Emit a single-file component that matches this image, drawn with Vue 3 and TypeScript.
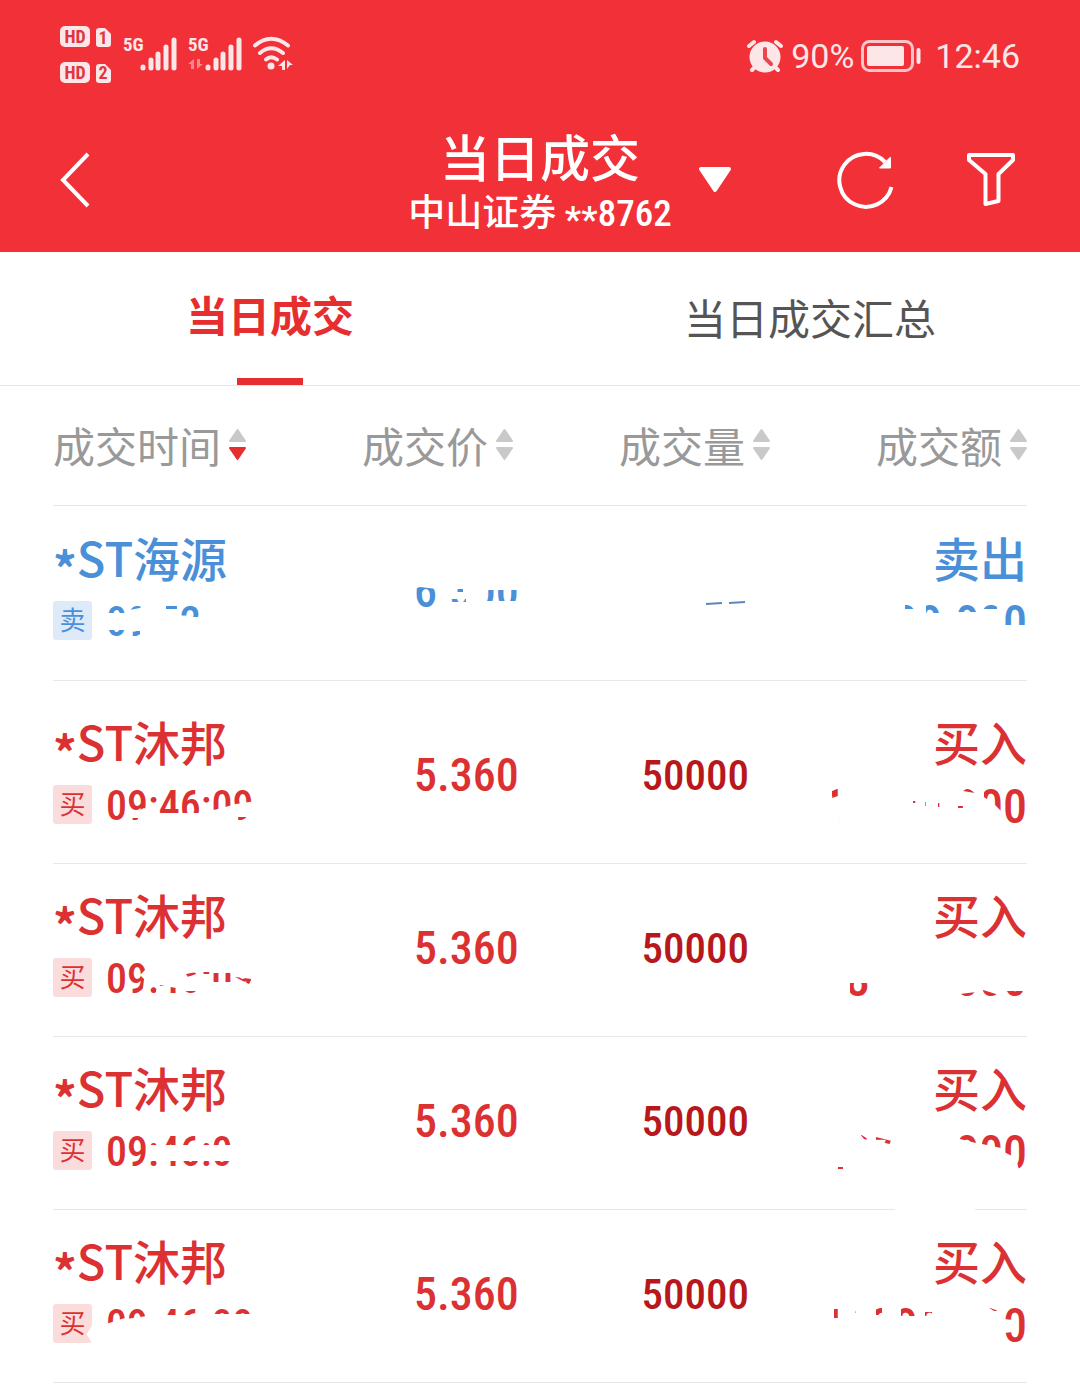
<script setup lang="ts">
type Side = 'sell' | 'buy'
type Point = [number, number]

interface Trade {
  id: number
  side: Side
  name: string
  time: string
  price: string
  volume: string
  amount: string
  timeParts: Point[][]
  priceParts?: Point[][]
  amountParts: Point[][]
}

interface Column {
  key: string
  label: string
  order: 'none' | 'desc'
}

const box = (x1: number, y1: number, x2: number, y2: number): Point[] => [
  [x1, y1],
  [x2, y1],
  [x2, y2],
  [x1, y2],
]

// Private values are only shown through a few small windows.
const reveal = (parts?: Point[][]) =>
  parts
    ? {
        clipPath: `path('${parts
          .map((part) => 'M' + part.map((p) => p.join(' ')).join('L') + 'Z')
          .join('')}')`,
      }
    : {}

const columns: Column[] = [
  { key: 'time', label: '成交时间', order: 'desc' },
  { key: 'price', label: '成交价', order: 'none' },
  { key: 'volume', label: '成交量', order: 'none' },
  { key: 'amount', label: '成交额', order: 'none' },
]

const trades: Trade[] = [
  {
    id: 1,
    side: 'sell',
    name: 'ST海源',
    time: '09:52:',
    price: '6.300',
    volume: '',
    amount: '68800.000',
    timeParts: [
      box(0, 4, 19, 13),
      box(0, 30, 19, 40),
      [[23, 10], [26, 4], [38, 4], [34, 8]],
      box(26, 31, 34, 40),
      box(60, 4, 71, 9),
      box(75, 4, 94, 17),
    ],
    priceParts: [
      [[0, 22], [6, 20], [23, 22], [23, 46], [0, 46]],
      box(36, 22, 49, 25),
      box(36, 32, 52, 35),
      box(72, 23, 106, 34),
    ],
    amountParts: [
      box(85, 4, 97, 9),
      box(106, 4, 124, 13),
      box(138, 4, 156, 12),
      box(162, 4, 177, 9),
      box(184, 4, 207, 25),
    ],
  },
  {
    id: 2,
    side: 'buy',
    name: 'ST沐邦',
    time: '09:46:09',
    price: '5.360',
    volume: '50000',
    amount: '18700.000',
    timeParts: [
      box(0, 0, 20, 40),
      [[20, 0], [150, 0], [150, 17], [130, 20], [112, 25], [92, 29], [50, 29], [38, 24], [30, 28], [20, 22]],
      box(26, 34, 32, 40),
      box(132, 33, 140, 40),
    ],
    amountParts: [
      [[12, 4], [24, 4], [24, 10], [12, 14]],
      box(18, 32, 24, 40),
      box(93, 17, 99, 19),
      box(105, 18, 110, 22),
      box(118, 19, 123, 23),
      box(138, 22, 143, 24),
      [[143, 7], [148, 4], [155, 9]],
      [[164, 4], [182, 4], [182, 28], [174, 20], [164, 13]],
      box(184, 0, 207, 44),
    ],
  },
  {
    id: 3,
    side: 'buy',
    name: 'ST沐邦',
    time: '09:46:09',
    price: '5.360',
    volume: '50000',
    amount: '8800.000',
    timeParts: [
      [[0, 0], [40, 0], [40, 12], [34, 18], [38, 22], [36, 40], [0, 40]],
      [[43, 26], [70, 31], [70, 40], [62, 40], [62, 33], [50, 33], [50, 40], [43, 40]],
      [[80, 17], [90, 15], [90, 17], [82, 20]],
      box(78, 34, 90, 37),
      box(96, 15, 104, 17),
      box(106, 16, 126, 25),
      [[129, 20], [146, 22], [143, 27]],
    ],
    amountParts: [
      box(30, 26, 48, 44),
      [[140, 37], [156, 35], [156, 44], [140, 44]],
      [[163, 33], [176, 37], [176, 44], [163, 44]],
      box(184, 34, 207, 44),
    ],
  },
  {
    id: 4,
    side: 'buy',
    name: 'ST沐邦',
    time: '09:46:0',
    price: '5.360',
    volume: '50000',
    amount: '25700.000',
    timeParts: [box(0, 0, 41, 40), box(41, 0, 126, 15), box(41, 31, 126, 40)],
    amountParts: [
      [[40, 4], [51, 11], [44, 9]],
      [[56, 7], [76, 12], [74, 15], [56, 11]],
      [[140, 4], [156, 4], [156, 13], [140, 9]],
      [[162, 4], [181, 4], [181, 18], [162, 14]],
      [[184, 0], [207, 0], [207, 40], [199, 40], [196, 28], [184, 22]],
      box(18, 37, 23, 39),
    ],
  },
  {
    id: 5,
    side: 'buy',
    name: 'ST沐邦',
    time: '09:46:09',
    price: '5.360',
    volume: '50000',
    amount: '17800.000',
    timeParts: [
      [[0, 0], [19, 0], [19, 15], [0, 21]],
      [[20, 0], [41, 0], [41, 13], [20, 16]],
      box(56, 0, 92, 12),
      box(106, 0, 150, 11),
    ],
    amountParts: [
      box(14, 6, 24, 15),
      [[33, 16], [36, 7], [35, 16]],
      box(56, 5, 62, 12),
      box(81, 5, 99, 13),
      box(105, 9, 112, 13),
      [[168, 4], [178, 8], [174, 8]],
      [[184, 0], [207, 0], [207, 44], [184, 44], [184, 30], [193, 29], [193, 17], [184, 16]],
    ],
  },
]
</script>

<template>
  <div class="screen">
    <header class="top">
      <div class="status">
        <div class="status-left">
          <svg class="sims" viewBox="0 0 52 58" aria-hidden="true">
            <g fill="#fde6e7">
              <rect x="0" y="0" width="30" height="21" rx="5" />
              <path d="M39 2h6l6 6v10q0 3-3 3h-9q-3 0-3-3V5q0-3 3-3z" />
              <rect x="0" y="36" width="30" height="21" rx="5" />
              <path d="M39 38h6l6 6v10q0 3-3 3h-9q-3 0-3-3V41q0-3 3-3z" />
            </g>
            <g fill="#e0373e" class="sim-text">
              <text x="15" y="17" text-anchor="middle">HD</text>
              <text x="43" y="18" text-anchor="middle">1</text>
              <text x="15" y="53" text-anchor="middle">HD</text>
              <text x="43" y="53" text-anchor="middle">2</text>
            </g>
          </svg>
          <div class="signal">
            <span class="net">5G</span>
            <svg width="54" height="36" viewBox="0 0 54 36" aria-hidden="true">
              <path d="M20 31v1M28 24v8M35 18v14M43 11v21M51 4v28" stroke="#fde6e7" stroke-width="5" stroke-linecap="round" />
            </svg>
          </div>
          <div class="signal">
            <span class="net">5G</span>
            <svg width="54" height="36" viewBox="0 0 54 36" aria-hidden="true">
              <path d="M6 23v10H3v-5H0zM9 23v10l6-5h-3v-5z" fill="#f8878b" />
              <path d="M20 31v1M28 24v8M35 18v14M43 11v21M51 4v28" stroke="#fde6e7" stroke-width="5" stroke-linecap="round" />
            </svg>
          </div>
          <svg class="wifi" viewBox="0 0 41 36" aria-hidden="true">
            <g fill="none" stroke="#fde6e7" stroke-width="4" stroke-linecap="round">
              <path d="M2 9.500Q18 -4 35 9.500M7 17Q18 7.500 30 17M13 23.500Q18 19 24 23.500" />
            </g>
            <circle cx="18" cy="30" r="3.500" fill="#fde6e7" />
            <path d="M32 24v10h-3v-4h-4zM34 24l6 5h-3l-3 4z" fill="#fde6e7" />
          </svg>
        </div>
        <div class="status-right">
          <svg class="alarm" viewBox="0 0 36 34" aria-hidden="true">
            <circle cx="18" cy="18" r="15.500" fill="#fde6e7" />
            <path d="M2 7l5-4M34 7l-5-4M5 31l3-3M31 31l-3-3" stroke="#fde6e7" stroke-width="4" stroke-linecap="round" />
            <path d="M18 10v9l6 6" fill="none" stroke="#e8474d" stroke-width="4" stroke-linecap="round" stroke-linejoin="round" />
          </svg>
          <span>90%</span>
          <svg class="battery" viewBox="0 0 60 34" aria-hidden="true">
            <rect x="1.500" y="2.500" width="50" height="29" rx="7" fill="none" stroke="#fbc5c7" stroke-width="3" />
            <rect x="6" y="7" width="37" height="20" rx="2" fill="#fde6e7" />
            <path d="M57.500 11v12" stroke="#fde6e7" stroke-width="4" stroke-linecap="round" />
          </svg>
          <span>12:46</span>
        </div>
      </div>

      <div class="bar">
        <button class="icon-btn" type="button" aria-label="返回">
          <svg width="32" height="56" viewBox="0 0 32 56" aria-hidden="true">
            <path d="M28 2L3 28l25 26" fill="none" stroke="#fff" stroke-width="4" />
          </svg>
        </button>
        <div class="title">
          <h1>当日成交</h1>
          <p class="account">中山证券 <span class="star">**</span>8762</p>
        </div>
        <div class="right-tools">
          <button class="icon-btn" type="button" aria-label="切换账户">
            <svg width="34" height="28" viewBox="0 0 34 28" aria-hidden="true">
              <path d="M3 3h28L17 24z" fill="#fff" stroke="#fff" stroke-width="4" stroke-linejoin="round" />
            </svg>
          </button>
          <div class="tools">
            <button class="icon-btn" type="button" aria-label="刷新">
              <svg width="58" height="60" viewBox="0 0 58 60" aria-hidden="true">
                <path d="M54.500 37A26.500 26.500 0 1 1 48 12" fill="none" stroke="#fff" stroke-width="4" />
                <path d="M53.500 7v11H42.500z" fill="#fff" stroke="#fff" stroke-width="1" />
              </svg>
            </button>
            <button class="icon-btn" type="button" aria-label="筛选">
              <svg width="50" height="60" viewBox="0 0 50 60" aria-hidden="true">
                <path d="M3 5h44v5L32.500 24v27L19.500 54V24L3 10z" fill="none" stroke="#fff" stroke-width="4" stroke-linejoin="round" />
              </svg>
            </button>
          </div>
        </div>
      </div>
    </header>

    <nav class="tabs">
      <button class="tab active" type="button">当日成交</button>
      <button class="tab" type="button">当日成交汇总</button>
    </nav>

    <main>
      <table>
        <colgroup>
          <col class="c-time" />
          <col class="c-price" />
          <col class="c-volume" />
          <col class="c-amount" />
        </colgroup>
        <thead>
          <tr>
            <th v-for="c in columns" :key="c.key" :class="c.key" scope="col">
              <button class="sort" type="button">
                {{ c.label }}
                <svg width="17" height="34" viewBox="0 0 17 34" aria-hidden="true">
                  <path d="M8.500 2L16 13H1z" fill="#c9c9c9" stroke="#c9c9c9" stroke-width="2" stroke-linejoin="round" />
                  <path
                    d="M8.500 31L16 20H1z"
                    :fill="c.order === 'desc' ? '#e62e30' : '#c9c9c9'"
                    :stroke="c.order === 'desc' ? '#e62e30' : '#c9c9c9'"
                    stroke-width="2"
                    stroke-linejoin="round"
                  />
                </svg>
              </button>
            </th>
          </tr>
        </thead>
        <tbody>
          <tr v-for="t in trades" :key="t.id" :class="[t.side, 'row-' + t.id]">
            <td class="time">
              <div class="name"><span class="star">*</span>{{ t.name }}</div>
              <div class="sub">
                <span class="badge">{{ t.side === 'sell' ? '卖' : '买' }}</span>
                <span class="clock-time" :style="reveal(t.timeParts)">{{ t.time }}</span>
              </div>
            </td>
            <td class="price">
              <span class="figure" :style="reveal(t.priceParts)">{{ t.price }}</span>
            </td>
            <td class="volume">
              <span v-if="t.volume" class="figure">{{ t.volume }}</span>
              <svg v-else class="figure" width="48" height="48" viewBox="0 0 48 48" aria-hidden="true">
                <path d="M5 37l16-1M28 36l16-1" stroke="#5f87b5" stroke-width="2" />
              </svg>
            </td>
            <td class="amount">
              <div class="name">{{ t.side === 'sell' ? '卖出' : '买入' }}</div>
              <div class="sum" :style="reveal(t.amountParts)">{{ t.amount }}</div>
            </td>
          </tr>
        </tbody>
      </table>
    </main>
  </div>
</template>

<style>
body {
  margin: 0;
  background: #fff;
}
</style>

<style scoped>
.screen {
  font-family: 'Noto Sans CJK SC', sans-serif;
  background: #fff;
  min-height: 100vh;
}

button {
  border: 0;
  padding: 0;
  background: none;
  font: inherit;
  color: inherit;
}

svg {
  display: block;
  flex: none;
}

.star {
  vertical-align: -6px;
  line-height: 0;
}

.name .star {
  vertical-align: -10px;
  font-weight: 700;
}

.top {
  background: #f13038;
  color: #fff;
}

.status {
  display: flex;
  justify-content: space-between;
  padding: 26px 60px 0;
  height: 84px;
  box-sizing: border-box;
}

.status-left {
  display: flex;
  gap: 11px;
}

.sims {
  width: 52px;
  height: 58px;
}

.sim-text {
  font: 700 18px 'Roboto Condensed', 'Liberation Sans Narrow', Roboto, sans-serif;
}

.signal {
  position: relative;
  width: 54px;
  height: 36px;
  margin-top: 10px;
}

.net {
  position: absolute;
  left: 0;
  top: -3px;
  font: 700 19px/24px 'Roboto Condensed', 'Liberation Sans Narrow', Roboto, sans-serif;
  color: #fde6e7;
}

.wifi {
  width: 41px;
  height: 36px;
  margin-top: 10px;
}

.status-right {
  display: flex;
  align-items: center;
  height: 60px;
  font: 400 34px Roboto, sans-serif;
  color: #fde6e7;
}

.alarm {
  width: 36px;
  height: 34px;
  margin-right: 8px;
}

.battery {
  width: 60px;
  height: 34px;
  margin: 0 14px 0 7px;
}

.bar {
  display: grid;
  grid-template-columns: 1fr auto 1fr;
  align-items: center;
  height: 168px;
  padding: 0 60px;
  box-sizing: border-box;
}

.icon-btn {
  display: block;
  justify-self: start;
  margin-top: 24px;
}

.title {
  text-align: center;
  padding-top: 30px;
}

h1 {
  margin: 0;
  font-size: 50px;
  line-height: 58px;
  font-weight: 500;
}

.account {
  margin: 0;
  padding-top: 4px;
  font: 500 37px/52px 'Roboto Condensed', 'Liberation Sans Narrow', 'Noto Sans CJK SC', sans-serif;
}

.right-tools {
  display: flex;
  align-items: center;
  justify-content: space-between;
  padding: 0 4px 0 26px;
}

.tools {
  display: flex;
  gap: 71px;
  align-items: center;
}

.tabs {
  display: flex;
  height: 133px;
  border-bottom: 1px solid #e8e8e8;
}

.tab {
  flex: 1;
  position: relative;
  font-size: 42px;
  line-height: 60px;
  color: #555;
  padding-bottom: 4px;
}

.tab.active {
  color: #e62e30;
  font-weight: 700;
  padding-bottom: 10px;
}

.tab.active::after {
  content: '';
  position: absolute;
  left: 50%;
  bottom: 0;
  width: 66px;
  height: 7px;
  margin-left: -33px;
  background: #e62e30;
}

main {
  padding: 0 53px;
}

table {
  width: 100%;
  border-collapse: collapse;
  table-layout: fixed;
}

.c-time {
  width: 203px;
}

.c-price,
.c-volume,
.c-amount {
  width: 257px;
}

tr {
  border-bottom: 1px solid #e8e8e8;
}

th,
td {
  padding: 0;
  text-align: right;
  vertical-align: top;
}

th.time,
td.time {
  text-align: left;
  white-space: nowrap;
}

th {
  height: 117px;
  padding-bottom: 2px;
  vertical-align: middle;
  font-weight: 400;
  font-size: 42px;
  line-height: 60px;
  color: #999;
}

.sort {
  display: inline-flex;
  align-items: center;
  gap: 8px;
  white-space: nowrap;
}

td {
  height: 150px;
  padding-top: 22px;
}

.row-1 td {
  height: 151px;
  padding-top: 23px;
}

.row-2 td {
  padding-top: 32px;
}

.sell {
  color: #4a90d9;
}

.buy {
  color: #dc3133;
}

.name {
  font-size: 47px;
  line-height: 56px;
  font-weight: 500;
}

.sub {
  display: flex;
  gap: 14px;
  align-items: flex-end;
  height: 40px;
  margin-top: 15px;
}

.badge {
  width: 39px;
  height: 39px;
  border-radius: 3px;
  font-size: 26px;
  line-height: 36px;
  text-align: center;
  background: #fbdcdd;
}

.sell .badge {
  background: #dfeaf8;
}

.row-5 .badge {
  clip-path: polygon(0 0, 100% 0, 100% 55%, 86% 78%, 100% 100%, 0 100%);
}

.clock-time {
  height: 40px;
  font: 500 42px/44px 'Roboto Condensed', 'Liberation Sans Narrow', Roboto, sans-serif;
}

.figure {
  display: inline-block;
  margin-top: 38px;
  font: 500 46px/48px 'Roboto Condensed', 'Liberation Sans Narrow', Roboto, sans-serif;
}

td.price {
  padding-left: 158px;
  text-align: left;
  white-space: nowrap;
}

td.volume {
  padding-right: 21px;
}

.volume .figure {
  font-size: 43px;
}

.buy .volume {
  color: #b8171b;
}

.sum {
  width: 207px;
  height: 44px;
  margin: 15px 0 0 auto;
  font: 500 48px/46px 'Roboto Condensed', 'Liberation Sans Narrow', Roboto, sans-serif;
}

.row-4 .amount {
  position: relative;
}

.row-4 .amount::after {
  content: '';
  position: absolute;
  right: 52px;
  bottom: -2px;
  width: 80px;
  height: 4px;
  background: #fff;
}
</style>
